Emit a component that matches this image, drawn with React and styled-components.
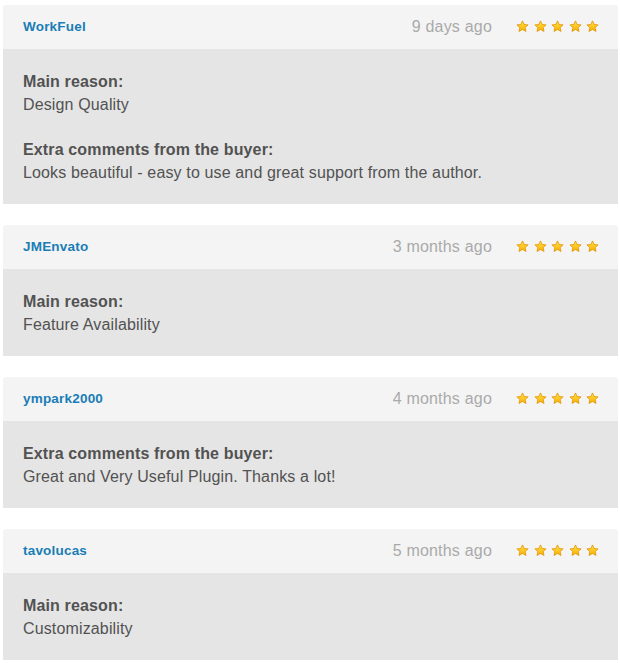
import React from "react";
import styled, { createGlobalStyle } from "styled-components";

const Global = createGlobalStyle`
  html, body { margin: 0; padding: 0; background: #fff; }
  body { font-family: "Liberation Sans", Arial, Helvetica, sans-serif; }
`;

const Page = styled.div`
  display: flex;
  flex-direction: column;
  gap: 21px;
  padding: 5px 2px 0 3px;
`;

const Card = styled.section`
  display: flex;
  flex-direction: column;
`;

const Header = styled.div`
  display: flex;
  align-items: center;
  height: 44px;
  padding: 0 19px 0 20px;
  background: #f4f4f4;
  border-radius: 3px 3px 0 0;
`;

const User = styled.a`
  font-size: 13.5px;
  font-weight: bold;
  letter-spacing: 0.2px;
  color: #1a7db6;
  text-decoration: none;
  margin-top: -2px;
`;

const Date = styled.span`
  margin-left: auto;
  font-size: 16px;
  letter-spacing: 0.2px;
  color: #aaaaaa;
  margin-right: 24px;
`;

const Stars = styled.div`
  display: flex;
  gap: 4.5px;
  margin-top: -1px;
`;

const Body = styled.div`
  display: flex;
  flex-direction: column;
  gap: 22px;
  padding: 21px 20px 20px 20px;
  background: #e5e5e5;
  color: #525252;
  font-size: 16px;
  line-height: 23px;
  letter-spacing: 0.14px;
`;

const Group = styled.div`
  display: flex;
  flex-direction: column;
`;

const Label = styled.div`
  font-weight: bold;
`;

const Star = () => (
  <svg width="13" height="13" viewBox="0 0 26 26">
    <defs>
      <linearGradient id="sg" x1="0" y1="0" x2="0" y2="1">
        <stop offset="0" stopColor="#ffe24a" />
        <stop offset="1" stopColor="#f8b100" />
      </linearGradient>
    </defs>
    <path
      d="M13 1.8 L16.3 9 L24.2 9.8 L18.3 15.1 L20 22.9 L13 18.9 L6 22.9 L7.7 15.1 L1.8 9.8 L9.7 9 Z"
      fill="url(#sg)"
      stroke="#e29300"
      strokeWidth="1.6"
      strokeLinejoin="round"
    />
  </svg>
);

const reviews = [
  {
    user: "WorkFuel",
    date: "9 days ago",
    reason: "Design Quality",
    comment: "Looks beautiful - easy to use and great support from the author.",
  },
  { user: "JMEnvato", date: "3 months ago", reason: "Feature Availability" },
  {
    user: "ympark2000",
    date: "4 months ago",
    comment: "Great and Very Useful Plugin. Thanks a lot!",
  },
  { user: "tavolucas", date: "5 months ago", reason: "Customizability" },
];

export default function App() {
  return (
    <>
      <Global />
      <Page>
        {reviews.map((r) => (
          <Card key={r.user}>
            <Header>
              <User href="#">{r.user}</User>
              <Date>{r.date}</Date>
              <Stars>
                {[0, 1, 2, 3, 4].map((i) => (
                  <Star key={i} />
                ))}
              </Stars>
            </Header>
            <Body>
              {r.reason && (
                <Group>
                  <Label>Main reason:</Label>
                  <div>{r.reason}</div>
                </Group>
              )}
              {r.comment && (
                <Group>
                  <Label>Extra comments from the buyer:</Label>
                  <div>{r.comment}</div>
                </Group>
              )}
            </Body>
          </Card>
        ))}
      </Page>
    </>
  );
}
